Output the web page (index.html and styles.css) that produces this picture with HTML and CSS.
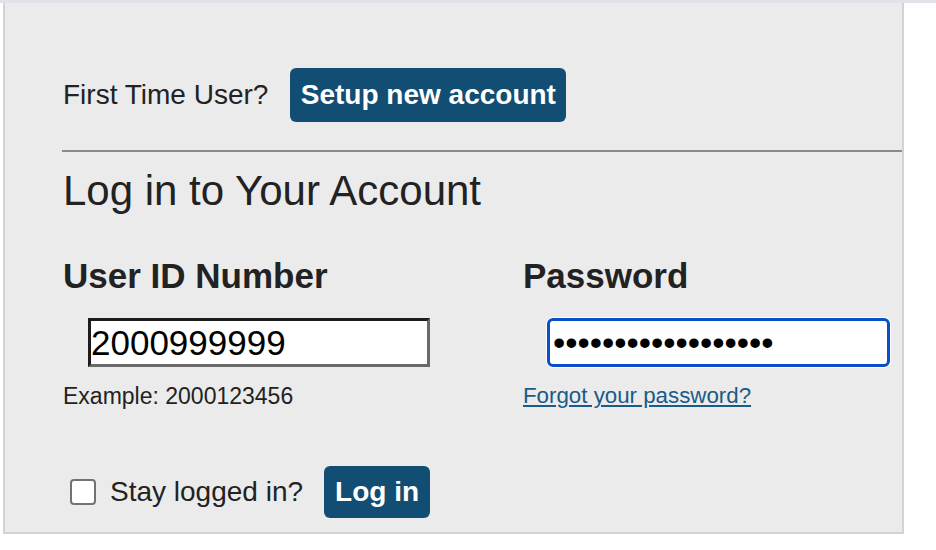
FILE: index.html
```html
<!DOCTYPE html>
<html lang="en">
<head>
<meta charset="utf-8">
<title>Log in</title>
<link rel="stylesheet" href="styles.css">
</head>
<body>
<div class="topbar"></div>
<div class="panel">
  <div class="first-row">
    <span class="first-text">First Time User?</span>
    <button class="btn btn-setup" type="button">Setup new account</button>
  </div>
  <hr class="rule">
  <h1 class="title">Log in to Your Account</h1>
  <div class="fields">
    <div class="field">
      <label class="label" for="uid">User ID Number</label>
      <input class="input input-id" id="uid" type="text" value="2000999999">
      <div class="hint">Example: 2000123456</div>
    </div>
    <div class="field">
      <label class="label" for="pw">Password</label>
      <input class="input input-pw" id="pw" type="password" value="abcdefghijklmnopqr">
      <a class="hint link" href="#">Forgot your password?</a>
    </div>
  </div>
  <div class="login-row">
    <input class="check" type="checkbox" id="stay">
    <label class="stay" for="stay">Stay logged in?</label>
    <button class="btn btn-login" type="button">Log in</button>
  </div>
</div>
</body>
</html>
```
FILE: styles.css
```css
html, body {
  margin: 0;
  padding: 0;
  background: #ffffff;
  font-family: "Liberation Sans", Arial, sans-serif;
  color: #222222;
}

.topbar {
  height: 3px;
  background: #e0e2ea;
}

.panel {
  margin-left: 3px;
  background: #ebebeb;
  border-left: 2px solid #d3d3d3;
  border-right: 2px solid #d3d3d3;
  border-bottom: 2px solid #d3d3d3;
  padding: 65px 0 14px 58px;
  box-sizing: content-box;
  width: 839px;
}

.first-row {
  display: flex;
  align-items: center;
  gap: 22px;
  height: 54px;
}

.first-text {
  font-size: 28px;
  line-height: 32px;
}

.btn {
  font-family: "Liberation Sans", Arial, sans-serif;
  font-weight: bold;
  font-size: 28px;
  line-height: 32px;
  color: #ffffff;
  background: #124e73;
  border: none;
  border-radius: 6px;
  margin: 0;
  cursor: pointer;
  text-align: center;
}

.btn-setup {
  height: 54px;
  width: 276px;
  padding: 0;
}

.btn-login {
  height: 52px;
  width: 106px;
  padding: 0;
  margin-left: 21px;
}

.rule {
  margin: 28px 0 0 -1px;
  border: none;
  height: 2px;
  background: #8a8a8a;
}

.title {
  margin: 15px 0 0;
  font-weight: normal;
  font-size: 42px;
  line-height: 48px;
  color: #222222;
}

.fields {
  display: grid;
  grid-template-columns: 460px 1fr;
  margin-top: 41px;
}

.field {
  display: flex;
  flex-direction: column;
  align-items: flex-start;
}

.label {
  font-weight: bold;
  font-size: 35px;
  line-height: 40px;
  color: #222222;
}

.input {
  box-sizing: border-box;
  height: 49px;
  margin: 22px 0 0 25px;
  font-family: "Liberation Sans", Arial, sans-serif;
  font-size: 35px;
  color: #000000;
  background: #ffffff;
  outline: none;
}

.input-id {
  width: 342px;
  padding: 0;
  border-style: solid;
  border-width: 3px;
  border-color: #1c1c1c #6a6a6a #6a6a6a #1c1c1c;
  border-radius: 0;
}

.input-pw {
  width: 343px;
  margin-left: 24px;
  padding: 0 3px;
  border: 3px solid #0b4ec9;
  border-radius: 6px;
  box-shadow: 0 0 0 1px #ffffff;
}

.hint {
  margin-top: 16px;
  font-size: 23px;
  line-height: 26px;
  color: #222222;
}

.link {
  color: #1a5b88;
  text-decoration: underline;
  font-size: 22.3px;
}

.login-row {
  display: flex;
  align-items: center;
  margin-top: 57px;
  height: 52px;
}

.check {
  appearance: none;
  -webkit-appearance: none;
  box-sizing: border-box;
  width: 26px;
  height: 26px;
  margin: 0 14px 0 7px;
  border: 2px solid #727272;
  border-radius: 4px;
  background: #ffffff;
}

.stay {
  font-size: 28px;
  line-height: 32px;
  color: #222222;
}
```
